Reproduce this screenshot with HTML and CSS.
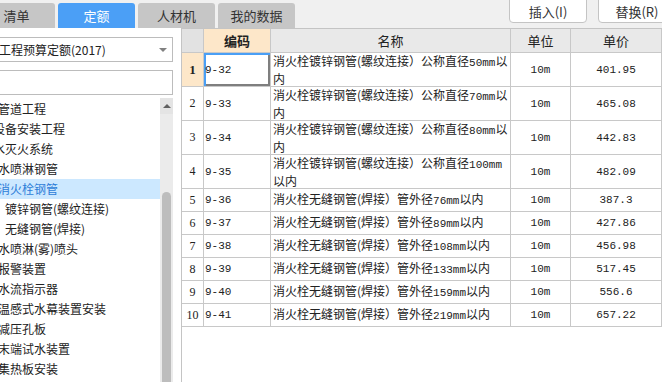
FILE: index.html
```html
<!DOCTYPE html>
<html lang="zh-CN">
<head>
  <meta charset="UTF-8">
  <title>定额</title>
  <link rel="stylesheet" href="styles.css">
</head>
<body>

  <!-- 顶部页签和按钮 -->
  <div class="top">
    <div class="tabs">
      <div class="tab">清单</div>
      <div class="tab on">定额</div>
      <div class="tab">人材机</div>
      <div class="tab">我的数据</div>
    </div>
    <div class="actions">
      <button class="btn">插入(I)</button>
      <button class="btn">替换(R)</button>
    </div>
  </div>

  <div class="main">
    <!-- 左侧定额库和章节树 -->
    <div class="side">
      <div class="select">
        <span>工程预算定额(2017)</span>
        <span class="caret"></span>
      </div>
      <div class="search"></div>
      <div class="tree-wrap">
        <ul class="tree">
          <li>管道工程</li>
          <li class="cut">设备安装工程</li>
          <li class="cut">水灭火系统</li>
          <li>水喷淋钢管</li>
          <li class="sel">消火栓钢管</li>
          <li class="sub">镀锌钢管(螺纹连接)</li>
          <li class="sub">无缝钢管(焊接)</li>
          <li>水喷淋(雾)喷头</li>
          <li>报警装置</li>
          <li>水流指示器</li>
          <li>温感式水幕装置安装</li>
          <li>减压孔板</li>
          <li>末端试水装置</li>
          <li>集热板安装</li>
        </ul>
        <div class="vbar">
          <div class="up"></div>
          <div class="thumb"></div>
        </div>
      </div>
    </div>

    <!-- 定额列表 -->
    <div class="grid">
      <table>
        <colgroup>
          <col class="c-no">
          <col class="c-code">
          <col class="c-name">
          <col class="c-unit">
          <col class="c-price">
        </colgroup>
        <tr class="hd">
          <th class="no"></th>
          <th class="code-h">编码</th>
          <th>名称</th>
          <th>单位</th>
          <th>单价</th>
        </tr>
        <tr class="tall cur">
          <td class="no">1</td>
          <td class="code focus">9-32</td>
          <td class="name">消火栓镀锌钢管(螺纹连接）公称直径<span class="n">50mm</span>以<br>内</td>
          <td class="num">10m</td>
          <td class="num">401.95</td>
        </tr>
        <tr class="tall">
          <td class="no">2</td>
          <td class="code">9-33</td>
          <td class="name">消火栓镀锌钢管(螺纹连接）公称直径<span class="n">70mm</span>以<br>内</td>
          <td class="num">10m</td>
          <td class="num">465.08</td>
        </tr>
        <tr class="tall">
          <td class="no">3</td>
          <td class="code">9-34</td>
          <td class="name">消火栓镀锌钢管(螺纹连接）公称直径<span class="n">80mm</span>以<br>内</td>
          <td class="num">10m</td>
          <td class="num">442.83</td>
        </tr>
        <tr class="tall">
          <td class="no">4</td>
          <td class="code">9-35</td>
          <td class="name">消火栓镀锌钢管(螺纹连接）公称直径<span class="n">100mm</span><br>以内</td>
          <td class="num">10m</td>
          <td class="num">482.09</td>
        </tr>
        <tr>
          <td class="no">5</td>
          <td class="code">9-36</td>
          <td class="name">消火栓无缝钢管(焊接）管外径<span class="n">76mm</span>以内</td>
          <td class="num">10m</td>
          <td class="num">387.3</td>
        </tr>
        <tr>
          <td class="no">6</td>
          <td class="code">9-37</td>
          <td class="name">消火栓无缝钢管(焊接）管外径<span class="n">89mm</span>以内</td>
          <td class="num">10m</td>
          <td class="num">427.86</td>
        </tr>
        <tr>
          <td class="no">7</td>
          <td class="code">9-38</td>
          <td class="name">消火栓无缝钢管(焊接）管外径<span class="n">108mm</span>以内</td>
          <td class="num">10m</td>
          <td class="num">456.98</td>
        </tr>
        <tr>
          <td class="no">8</td>
          <td class="code">9-39</td>
          <td class="name">消火栓无缝钢管(焊接）管外径<span class="n">133mm</span>以内</td>
          <td class="num">10m</td>
          <td class="num">517.45</td>
        </tr>
        <tr>
          <td class="no">9</td>
          <td class="code">9-40</td>
          <td class="name">消火栓无缝钢管(焊接）管外径<span class="n">159mm</span>以内</td>
          <td class="num">10m</td>
          <td class="num">556.6</td>
        </tr>
        <tr>
          <td class="no">10</td>
          <td class="code">9-41</td>
          <td class="name">消火栓无缝钢管(焊接）管外径<span class="n">219mm</span>以内</td>
          <td class="num">10m</td>
          <td class="num">657.22</td>
        </tr>
      </table>
    </div>
  </div>

</body>
</html>
```

FILE: styles.css
```css
/* 页面基础 */
html, body {
  margin: 0;
  padding: 0;
  width: 662px;
  height: 382px;
  overflow: hidden;
  background: #fff;
  font-family: "Noto Sans CJK SC", sans-serif;
  color: #222;
}

/* 顶部栏 */
.top {
  display: flex;
  align-items: flex-start;
  height: 28px;
  background: #f0f0f0;
}

.tabs {
  display: flex;
  gap: 3px;
  margin-left: -22px;
  padding-top: 3px;
}

.tab {
  width: 77px;
  height: 25px;
  line-height: 25px;
  text-align: center;
  font-size: 13px;
  color: #333;
  background: #c6c6c6;
  border-radius: 3px 3px 0 0;
}

.tab.on {
  background: #4b9ff6;
  color: #fff;
}

.actions {
  display: flex;
  gap: 11px;
  margin-left: auto;
  margin-right: -14px;
  margin-top: -2px;
}

.btn {
  width: 78px;
  height: 25px;
  padding: 2px 0 0;
  background: #fff;
  border: 1px solid #c4c4c4;
  border-radius: 0 0 4px 4px;
  font-family: "Noto Sans CJK SC", sans-serif;
  font-size: 13px;
  color: #333;
}

.main {
  display: flex;
  height: 354px;
}

/* 左侧面板 */
.side {
  width: 181px;
  flex: none;
  overflow: hidden;
  padding-top: 9px;
  box-sizing: border-box;
  display: flex;
  flex-direction: column;
}

.select, .search {
  width: 183px;
  height: 25px;
  margin-left: -10px;
  box-sizing: border-box;
  border: 1px solid #bcbcbc;
  background: #fff;
  flex: none;
}

.select {
  display: flex;
  align-items: center;
  padding-left: 8px;
  font-size: 12px;
  white-space: nowrap;
}

.caret {
  margin-left: auto;
  margin-right: 5px;
  border-left: 4px solid transparent;
  border-right: 4px solid transparent;
  border-top: 4px solid #808080;
}

.search {
  margin-top: 8px;
}

.tree-wrap {
  display: flex;
  flex: 1;
  min-height: 0;
  margin-top: 3px;
}

.tree {
  list-style: none;
  margin: 0;
  padding: 1px 0 0;
  width: 160px;
  overflow: hidden;
}

.tree li {
  height: 20px;
  line-height: 20px;
  font-size: 12px;
  white-space: nowrap;
  text-indent: -2px;
}

.tree li.cut {
  text-indent: -7px;
}

.tree li.sub {
  text-indent: 5px;
}

.tree li.sel {
  background: #cce8ff;
  color: #2d7dd8;
}

/* 滚动条 */
.vbar {
  width: 13px;
  background: #ebebeb;
  display: flex;
  flex-direction: column;
}

.up {
  height: 16px;
  display: flex;
  justify-content: center;
  align-items: center;
  background: #e4e4e4;
}

.up::before {
  content: '';
  border-left: 4px solid transparent;
  border-right: 4px solid transparent;
  border-bottom: 4px solid #606060;
}

.thumb {
  flex: 1;
  margin: 78px 2px 0;
  background: #bdbdbd;
  border-radius: 5px 5px 0 0;
}

/* 右侧表格 */
.grid {
  flex: 1;
  border-left: 1px solid #c4c4c4;
  border-top: 1px solid #c4c4c4;
  background: #fff;
  overflow: hidden;
}

table {
  border-collapse: separate;
  border-spacing: 0;
  table-layout: fixed;
  width: 480px;
}

.c-no { width: 22px; }
.c-code { width: 67px; }
.c-name { width: 240px; }
.c-unit { width: 60px; }
.c-price { width: 91px; }

th, td {
  padding: 0;
  border-right: 1px solid #c8c8c8;
  border-bottom: 1px solid #c8c8c8;
  vertical-align: middle;
  overflow: hidden;
  white-space: nowrap;
}

tr { height: 23px; }
tr.hd { height: 24px; }
tr.tall { height: 33px; }

th {
  background: #e9e9e9;
  font-size: 13px;
  font-weight: normal;
  color: #222;
}

th.no {
  background: #e2e2e2;
}

th.code-h {
  background: #fde7c9;
  font-weight: bold;
}

td.no {
  text-align: center;
  font-family: "Liberation Serif", serif;
  font-size: 12px;
}

tr.cur td.no {
  background: #fde7c9;
  font-weight: bold;
  font-size: 13px;
}

td.code {
  padding-left: 1px;
  font-family: "Liberation Mono", monospace;
  font-size: 11px;
}

td.focus {
  box-shadow: inset 2px 2px 0 #4a9ff5, inset -2px -2px 0 #7f7f7f;
}

td.name {
  padding-left: 2px;
  font-size: 12px;
  line-height: 15px;
}

.n {
  font-family: "Liberation Mono", monospace;
  font-size: 11px;
}

td.num {
  text-align: center;
  font-family: "Liberation Mono", monospace;
  font-size: 11px;
}
```
